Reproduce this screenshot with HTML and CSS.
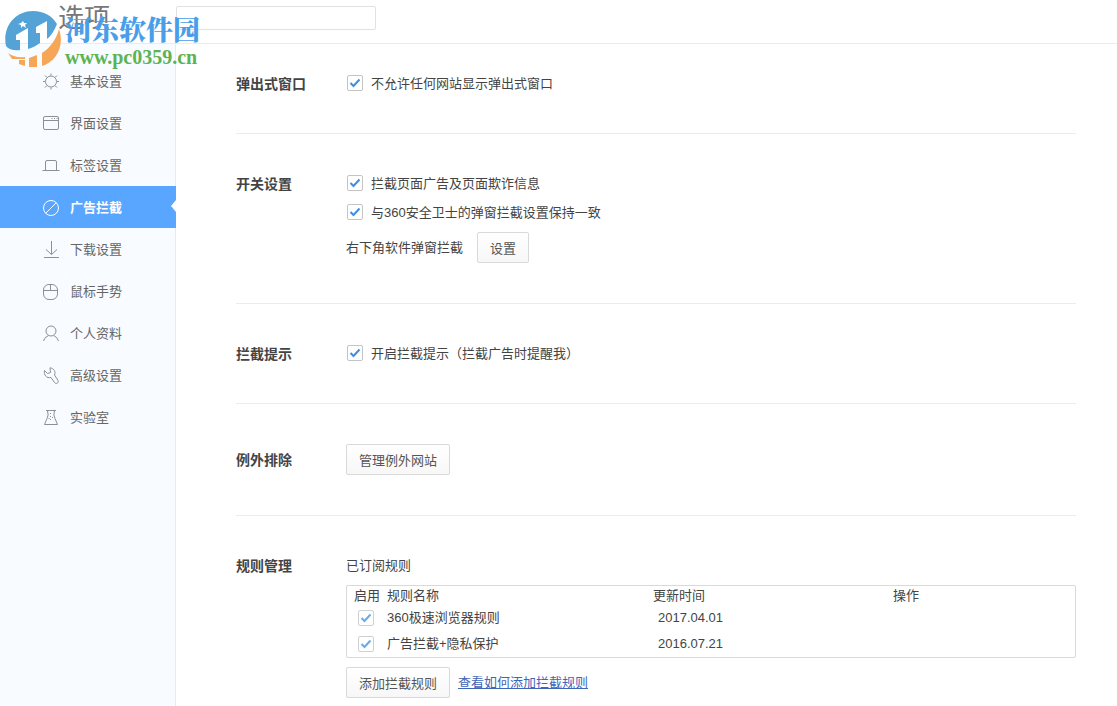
FILE: index.html
```html
<!DOCTYPE html>
<html lang="zh-CN">
<head>
<meta charset="utf-8">
<title>选项</title>
<link rel="stylesheet" href="styles.css">
</head>
<body>
<header class="topbar">
  <h1 class="title">选项</h1>
  <input class="search" type="text" aria-label="搜索">
  <div class="brand">
    <svg class="brand-logo" viewBox="0 0 56 56" aria-hidden="true">
      <path fill="#55a3d6" d="M1 35C-3 16 10 0 28 0c11 0 19 5 24 13-3 7-6 12-10 15V10l-11 6v6h4v10c-4 3-8 5-12 6V17l-12 7v5h4v10C10 40 4 39 1 35Z"/>
      <path fill="#fff" d="m18 10 1 2 3 0-2 2 1 3-3-2-2 2 0-3-3-1 3-1Z"/>
      <path fill="#f5a656" d="M54 18c6 17-3 33-17 37V42c8-5 14-13 17-24ZM24 47l8-3v12h-8ZM14 49h6v6l-6-2ZM3 42c4 3 10 5 17 4v2H7Z"/>
    </svg>
    <div class="brand-text">
      <span class="brand-name">河东软件园</span>
      <span class="brand-url">www.pc0359.cn</span>
    </div>
  </div>
</header>
<div class="layout">
  <nav class="sidebar">
    <a class="nav-item" href="#basic"><svg class="icon" viewBox="0 0 18 18"><circle cx="9" cy="8.500" r="5.500"/><path d="M9 .500v2M9 14.500v2M1 8.500h2M15 8.500h2M3 2.500l2 2M13 12.500l2 2M3 14.500l2-2M13 4.500l2-2"/></svg>基本设置</a>
    <a class="nav-item" href="#ui"><svg class="icon" viewBox="0 0 18 18"><rect x="1.500" y="1.500" width="15" height="13" rx="1.500"/><path d="M1.500 5.500h15M9.500 3.500h1M12 3.500h1M14.500 3.500h1"/></svg>界面设置</a>
    <a class="nav-item" href="#tabs"><svg class="icon" viewBox="0 0 18 18"><path d="M.500 13.500h17M3.500 13.500V5q0-1.500 1.500-1.500h8q1.500 0 1.500 1.500v8.500"/></svg>标签设置</a>
    <a class="nav-item active" href="#ads" aria-current="page"><svg class="icon" viewBox="0 0 18 18"><circle cx="9" cy="9" r="7.500"/><path d="M3.700 14.300 14.300 3.700"/></svg>广告拦截</a>
    <a class="nav-item" href="#download"><svg class="icon" viewBox="0 0 18 18"><path d="M9.500 0v13.500M4 8.500l5.500 5 5.500-5M2 16.500h15"/></svg>下载设置</a>
    <a class="nav-item" href="#mouse"><svg class="icon" viewBox="0 0 18 18"><rect x="1.500" y="1.500" width="14" height="15" rx="5.500"/><path d="M1.500 7.500h14M8.500 1.500v6"/></svg>鼠标手势</a>
    <a class="nav-item" href="#profile"><svg class="icon" viewBox="0 0 18 18"><circle cx="9" cy="6" r="5"/><path d="M1.500 16q1-4 5-5.500M16.500 16q-1-4-5-5.500"/></svg>个人资料</a>
    <a class="nav-item" href="#advanced"><svg class="icon" viewBox="0 0 18 18"><path d="M8 .800c4 .500 6 4 4.500 7.200l3.500 5.500c1 2.500-2 4-3.500 2L9 10.500C4.500 11.500 1.500 8 2.500 3.500L5.500 6.500 8.500 5.500Z"/></svg>高级设置</a>
    <a class="nav-item" href="#lab"><svg class="icon" viewBox="0 0 18 18"><path d="M4 1.500h10M5.500 1.500q1.500 5-.500 8l-2.500 6h13l-2.500-6q-2-3-.500-8M8.500 4v1M8.500 7v1M8.500 10v1M10.500 8v1M7 9v1"/></svg>实验室</a>
  </nav>
  <main class="content">
    <section class="group first">
      <h2 class="label">弹出式窗口</h2>
      <div class="fields">
        <label class="option"><input class="check" type="checkbox" checked>不允许任何网站显示弹出式窗口</label>
      </div>
    </section>
    <section class="group">
      <h2 class="label">开关设置</h2>
      <div class="fields">
        <label class="option"><input class="check" type="checkbox" checked>拦截页面广告及页面欺诈信息</label>
        <label class="option"><input class="check" type="checkbox" checked>与360安全卫士的弹窗拦截设置保持一致</label>
        <div class="row"><span>右下角软件弹窗拦截</span><button class="btn" type="button">设置</button></div>
      </div>
    </section>
    <section class="group">
      <h2 class="label">拦截提示</h2>
      <div class="fields">
        <label class="option"><input class="check" type="checkbox" checked>开启拦截提示（拦截广告时提醒我）</label>
      </div>
    </section>
    <section class="group">
      <h2 class="label tall">例外排除</h2>
      <div class="fields">
        <div class="row"><button class="btn" type="button">管理例外网站</button></div>
      </div>
    </section>
    <section class="group last">
      <h2 class="label">规则管理</h2>
      <div class="fields">
        <span>已订阅规则</span>
        <div class="table-box">
          <table class="rules">
            <thead>
              <tr><th class="col-on">启用</th><th class="col-name">规则名称</th><th class="col-date">更新时间</th><th>操作</th></tr>
            </thead>
            <tbody>
              <tr><td class="on"><input class="check soft" type="checkbox" aria-label="启用 360极速浏览器规则" checked></td><td>360极速浏览器规则</td><td class="date">2017.04.01</td><td></td></tr>
              <tr><td class="on"><input class="check soft" type="checkbox" aria-label="启用 广告拦截+隐私保护" checked></td><td>广告拦截+隐私保护</td><td class="date">2016.07.21</td><td></td></tr>
            </tbody>
          </table>
        </div>
        <div class="row actions"><button class="btn" type="button">添加拦截规则</button><a class="link" href="#help">查看如何添加拦截规则</a></div>
      </div>
    </section>
  </main>
</div>
</body>
</html>
```
FILE: styles.css
```css
* { box-sizing: border-box; }

body {
  margin: 0;
  min-height: 100vh;
  display: flex;
  flex-direction: column;
  background: #fff;
  color: #444;
  font: 13px/20px "Liberation Sans", "Noto Sans CJK SC", sans-serif;
}

.topbar {
  position: relative;
  display: flex;
  align-items: flex-start;
  height: 44px;
  border-bottom: 1px solid #ebebeb;
}

.title {
  width: 176px;
  margin: 0;
  padding-left: 58px;
  color: #777;
  font-size: 26px;
  font-weight: normal;
  line-height: 36px;
}

.search {
  width: 200px;
  height: 24px;
  margin-top: 6px;
  padding: 0 6px;
  border: 1px solid #e2e2e2;
  border-radius: 2px;
  background: #fff;
  font: inherit;
}

/* Site mark floating over the header and the top of the sidebar */
.brand {
  position: absolute;
  left: 5px;
  top: 11px;
  display: flex;
  gap: 4px;
  pointer-events: none;
}

.brand-logo { width: 56px; height: 56px; }

.brand-text {
  display: flex;
  flex-direction: column;
  white-space: nowrap;
}

.brand-name {
  color: #4a9ee9;
  font: 900 27px/36px "Noto Serif CJK SC", "Noto Sans CJK SC", serif;
}

.brand-url {
  color: #5db351;
  font: bold 20px/20px "Liberation Serif", serif;
}

.layout { flex: 1; display: flex; }

.sidebar {
  flex: none;
  width: 176px;
  padding-top: 16px;
  border-right: 1px solid #e6ebf1;
  background: #f8fbff;
}

.nav-item {
  position: relative;
  display: flex;
  align-items: center;
  gap: 10px;
  height: 42px;
  margin-right: -1px;
  padding: 2px 0 0 42px;
  color: #666;
  text-decoration: none;
}

.nav-item.active {
  background: #58a6ff;
  color: #fff;
  font-weight: bold;
}

.nav-item.active::after {
  content: "";
  position: absolute;
  right: 0;
  top: 14px;
  border: solid transparent;
  border-width: 6px 5px 6px 0;
  border-right-color: #fff;
}

.icon {
  width: 18px;
  height: 18px;
  fill: none;
  stroke: #8b9096;
  stroke-width: 1;
}

.active .icon { stroke: #fff; }

.content {
  flex: 1;
  padding: 0 41px 0 60px;
}

.group {
  display: flex;
  padding: 40px 0 39px;
  border-bottom: 1px solid #ececec;
}

.group.first { padding-top: 30px; }

.group.last { padding-bottom: 0; border-bottom: 0; }

.label {
  flex: none;
  width: 110px;
  margin: 0;
  font-size: 14px;
  font-weight: bold;
  line-height: 20px;
}

.label.tall { line-height: 32px; }

.fields {
  flex: 1;
  display: flex;
  flex-direction: column;
  gap: 9px;
}

.option {
  display: flex;
  align-items: flex-start;
  gap: 8px;
  padding-left: 1px;
}

.check {
  appearance: none;
  flex: none;
  width: 16px;
  height: 16px;
  margin: 0;
  border: 1px solid #c4c4c4;
  border-radius: 2px;
  background: #fff;
}

.option .check { margin-top: 1px; }

.check:checked {
  background: #fff url("data:image/svg+xml,%3Csvg xmlns='http://www.w3.org/2000/svg' viewBox='0 0 14 14'%3E%3Cpath d='M2.500 7l3 3 6-6.500' fill='none' stroke='%233f8fe0' stroke-width='2'/%3E%3C/svg%3E") center / 14px 14px no-repeat;
}

.check.soft { border-color: #d0d0d0; }

.check.soft:checked {
  background-image: url("data:image/svg+xml,%3Csvg xmlns='http://www.w3.org/2000/svg' viewBox='0 0 14 14'%3E%3Cpath d='M2.500 7l3 3 6-6.500' fill='none' stroke='%2365abee' stroke-width='2'/%3E%3C/svg%3E");
}

.row {
  display: flex;
  align-items: flex-start;
  gap: 14px;
  height: 32px;
  line-height: 32px;
}

.btn {
  height: 31px;
  padding: 0 12px;
  border: 1px solid #d9d9d9;
  border-radius: 2px;
  background: linear-gradient(#fff, #f7f7f7);
  color: #555;
  font: inherit;
}

.table-box {
  border: 1px solid #d9d9d9;
  border-radius: 2px;
}

.rules {
  width: 100%;
  border-collapse: collapse;
  table-layout: fixed;
}

.rules th {
  height: 19px;
  padding: 0;
  font-weight: normal;
  line-height: 19px;
  text-align: left;
}

.rules td {
  height: 26px;
  padding: 0;
}

.rules .col-on { width: 40px; padding-left: 7px; }
.rules .col-name { width: 266px; }
.rules .col-date { width: 240px; }
.rules .date { padding-left: 5px; }
.rules .on { padding-left: 11px; }
.rules .check { display: block; }

.actions { gap: 8px; }

.link { color: #3f66b8; }
```
